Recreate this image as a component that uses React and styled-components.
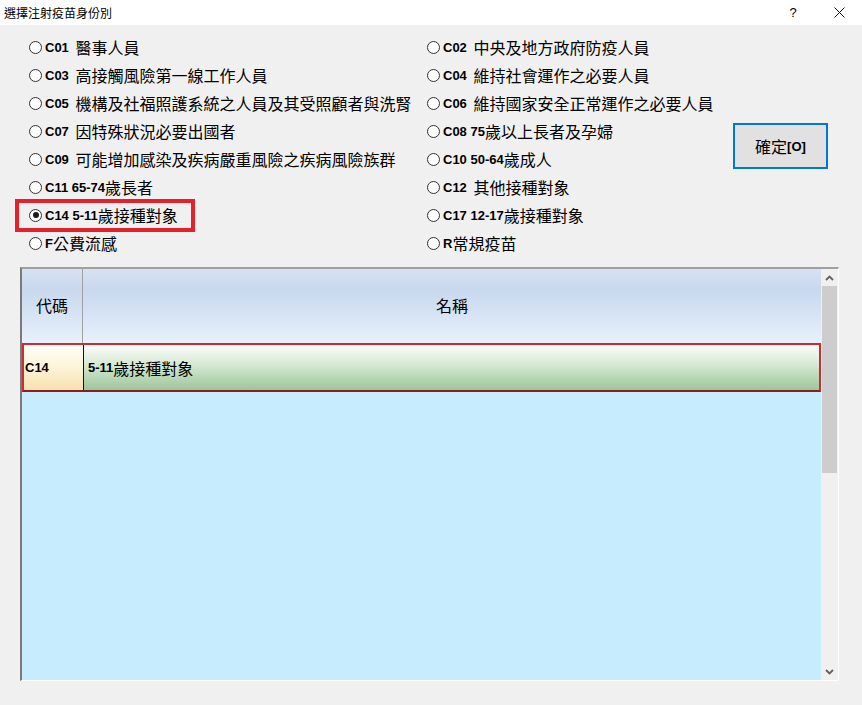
import React from 'react';
import styled, { createGlobalStyle } from 'styled-components';

const GlobalStyle = createGlobalStyle`
  html, body {
    margin: 0;
    padding: 0;
    background: #f0f0f0;
  }
  body {
    font-family: "Noto Sans CJK TC", "Liberation Sans", sans-serif;
    color: #000;
  }
`;

const Window = styled.div`
  width: 862px;
  height: 705px;
  display: flex;
  flex-direction: column;
  background: #f0f0f0;
  overflow: hidden;
`;

const TitleBar = styled.div`
  height: 25px;
  flex: none;
  display: flex;
  align-items: center;
  background: #fff;
  padding-left: 4px;
`;

const Title = styled.div`
  font-size: 12px;
  line-height: 1;
`;

const CaptionButton = styled.div`
  width: 46px;
  height: 25px;
  display: flex;
  align-items: center;
  justify-content: center;
  font-family: "Liberation Sans", sans-serif;
  font-size: 13px;
  margin-left: ${props => (props.first ? 'auto' : '0')};
`;

const Body = styled.div`
  display: flex;
  padding: 8px 0 0 29px;
`;

const OptionColumn = styled.div`
  width: ${props => props.width}px;
  display: flex;
  flex-direction: column;
`;

const Option = styled.div`
  position: relative;
  height: 28px;
  display: flex;
  align-items: center;

  ${props =>
    props.highlight &&
    `
    &:after {
      content: '';
      position: absolute;
      left: -14px;
      top: -2px;
      width: 180px;
      height: 33px;
      box-sizing: border-box;
      border: 4px solid #e3212a;
    }
  `}
`;

const Radio = styled.span`
  width: 13px;
  height: 13px;
  box-sizing: border-box;
  border: 1px solid #333;
  border-radius: 50%;
  background: #fff;
  margin-right: 3px;
  display: flex;
  align-items: center;
  justify-content: center;
  flex: none;

  &:after {
    content: '';
    width: 6px;
    height: 6px;
    border-radius: 50%;
    background: ${props => (props.checked ? '#1a1a1a' : 'transparent')};
  }
`;

const Latin = styled.span`
  font-family: "Liberation Sans", sans-serif;
  font-weight: bold;
  font-size: 13px;
  white-space: pre;
  padding-right: ${props => (props.trail ? '3px' : '0')};
`;

const Cjk = styled.span`
  font-family: "Noto Sans CJK TC", sans-serif;
  font-size: 16px;
  line-height: 1;
`;

const Label = styled.span`
  display: flex;
  align-items: center;
  line-height: 1;
`;

const ButtonColumn = styled.div`
  padding-top: 90px;
`;

const OkButton = styled.button`
  width: 95px;
  height: 46px;
  box-sizing: border-box;
  border: 2px solid #0078d7;
  background: #e1e1e1;
  padding: 0;
  display: flex;
  align-items: center;
  justify-content: center;
  cursor: pointer;
`;

const Frame = styled.div`
  margin: 10px 0 0 20px;
  width: 819px;
  height: 414px;
  box-sizing: border-box;
  border-style: solid;
  border-width: 2px 1px 1px 2px;
  border-color: #a0a0a0 #fff #fff #7a7a7a;
  display: flex;
`;

const GridArea = styled.div`
  flex: 1;
  display: flex;
  flex-direction: column;
  background: #c6ecfe;
`;

const HeaderRow = styled.div`
  height: 74px;
  display: flex;
  background: linear-gradient(
    180deg,
    #d6e2f2 0%,
    #c8d8ed 28%,
    #d6e3f4 60%,
    #e8f1fd 100%
  );
`;

const HeaderCell = styled.div`
  width: ${props => (props.width ? `${props.width}px` : 'auto')};
  flex: ${props => (props.width ? 'none' : '1')};
  display: flex;
  align-items: center;
  justify-content: center;
  border-right: ${props => (props.divider ? '1px solid #a0a0a0' : 'none')};
  font-size: 16px;
  padding-bottom: 2px;
`;

const DataRow = styled.div`
  height: 49px;
  box-sizing: border-box;
  display: flex;
  border: 2px solid #cf2a2f;
  border-bottom-color: #8a1e1e;
`;

const CodeCell = styled.div`
  width: 58px;
  flex: none;
  display: flex;
  align-items: center;
  padding-left: 1px;
  border-right: 1px solid #111;
  background: linear-gradient(180deg, #fffef7 0%, #fdf4d9 50%, #f7e1ad 100%);
`;

const NameCell = styled.div`
  flex: 1;
  display: flex;
  align-items: center;
  padding-left: 4px;
  background: linear-gradient(180deg, #fbfdfb 0%, #d4e8d2 45%, #9cc699 100%);
`;

const ScrollBar = styled.div`
  width: 17px;
  flex: none;
  display: flex;
  flex-direction: column;
  background: #f0f0f0;
`;

const ScrollArrow = styled.div`
  height: 17px;
  display: flex;
  align-items: center;
  justify-content: center;
`;

const Thumb = styled.div`
  height: 187px;
  margin: 0 1px;
  background: #cdcdcd;
`;

const Track = styled.div`
  flex: 1;
`;

const Chevron = ({ up }) => (
  <svg width="9" height="6" viewBox="0 0 9 6">
    <polyline
      points={up ? '1,5 4.5,1.5 8,5' : '1,1 4.5,4.5 8,1'}
      fill="none"
      stroke="#606060"
      strokeWidth="1.8"
    />
  </svg>
);

const CloseIcon = () => (
  <svg width="11" height="11" viewBox="0 0 11 11">
    <path d="M0.5 0.5 L10.5 10.5 M10.5 0.5 L0.5 10.5" stroke="#111" strokeWidth="1" />
  </svg>
);

// split ascii runs (bold) from cjk runs (regular), as the control font does
const Mixed = ({ text }) => {
  const parts = text.match(/[\x00-\x7f]+|[^\x00-\x7f]+/g) || [];
  return (
    <Label>
      {parts.map((p, i) =>
        /^[\x00-\x7f]+$/.test(p) ? (
          <Latin key={i} trail={p.endsWith(' ') && i < parts.length - 1}>
            {p}
          </Latin>
        ) : (
          <Cjk key={i}>{p}</Cjk>
        )
      )}
    </Label>
  );
};

const leftOptions = [
  'C01 醫事人員',
  'C03 高接觸風險第一線工作人員',
  'C05 機構及社福照護系統之人員及其受照顧者與洗腎',
  'C07 因特殊狀況必要出國者',
  'C09 可能增加感染及疾病嚴重風險之疾病風險族群',
  'C11 65-74歲長者',
  'C14 5-11歲接種對象',
  'F公費流感',
];

const rightOptions = [
  'C02 中央及地方政府防疫人員',
  'C04 維持社會運作之必要人員',
  'C06 維持國家安全正常運作之必要人員',
  'C08 75歲以上長者及孕婦',
  'C10 50-64歲成人',
  'C12 其他接種對象',
  'C17 12-17歲接種對象',
  'R常規疫苗',
];

const selected = 'C14 5-11歲接種對象';

const App = () => (
  <Window>
    <GlobalStyle />
    <TitleBar>
      <Title>選擇注射疫苗身份別</Title>
      <CaptionButton first>?</CaptionButton>
      <CaptionButton>
        <CloseIcon />
      </CaptionButton>
    </TitleBar>

    <Body>
      <OptionColumn width={398}>
        {leftOptions.map(o => (
          <Option key={o} highlight={o === selected}>
            <Radio checked={o === selected} />
            <Mixed text={o} />
          </Option>
        ))}
      </OptionColumn>
      <OptionColumn width={306}>
        {rightOptions.map(o => (
          <Option key={o}>
            <Radio />
            <Mixed text={o} />
          </Option>
        ))}
      </OptionColumn>
      <ButtonColumn>
        <OkButton>
          <Mixed text="確定[O]" />
        </OkButton>
      </ButtonColumn>
    </Body>

    <Frame>
      <GridArea>
        <HeaderRow>
          <HeaderCell width={60} divider>代碼</HeaderCell>
          <HeaderCell>名稱</HeaderCell>
        </HeaderRow>
        <DataRow>
          <CodeCell>
            <Latin>C14</Latin>
          </CodeCell>
          <NameCell>
            <Mixed text="5-11歲接種對象" />
          </NameCell>
        </DataRow>
      </GridArea>
      <ScrollBar>
        <ScrollArrow>
          <Chevron up />
        </ScrollArrow>
        <Thumb />
        <Track />
        <ScrollArrow>
          <Chevron />
        </ScrollArrow>
      </ScrollBar>
    </Frame>
  </Window>
);

export default App;
